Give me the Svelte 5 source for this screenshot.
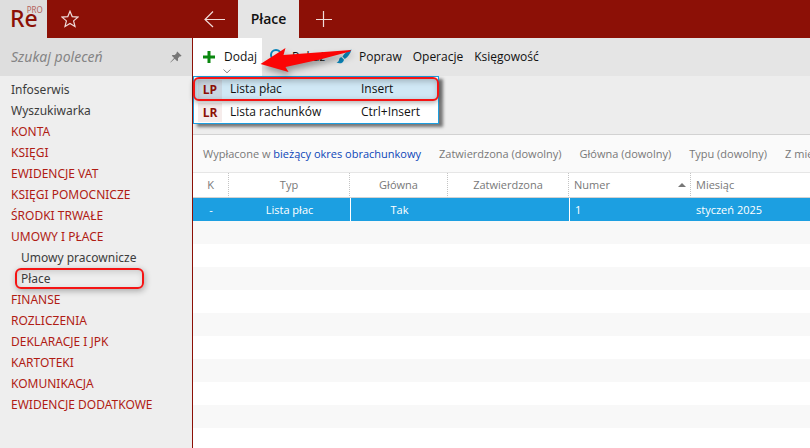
<script>
	let query = $state('');
	let selected = $state(0);
	let current = $state('Płace');

	const modules = [
		{ name: 'Infoserwis', kind: 'plain' },
		{ name: 'Wyszukiwarka', kind: 'plain' },
		{ name: 'KONTA', kind: 'group' },
		{ name: 'KSIĘGI', kind: 'group' },
		{ name: 'EWIDENCJE VAT', kind: 'group' },
		{ name: 'KSIĘGI POMOCNICZE', kind: 'group' },
		{ name: 'ŚRODKI TRWAŁE', kind: 'group' },
		{ name: 'UMOWY I PŁACE', kind: 'group' },
		{ name: 'Umowy pracownicze', kind: 'sub' },
		{ name: 'Płace', kind: 'sub' },
		{ name: 'FINANSE', kind: 'group' },
		{ name: 'ROZLICZENIA', kind: 'group' },
		{ name: 'DEKLARACJE I JPK', kind: 'group' },
		{ name: 'KARTOTEKI', kind: 'group' },
		{ name: 'KOMUNIKACJA', kind: 'group' },
		{ name: 'EWIDENCJE DODATKOWE', kind: 'group' }
	];

	const addMenu = [
		{ code: 'LP', name: 'Lista płac', shortcut: 'Insert' },
		{ code: 'LR', name: 'Lista rachunków', shortcut: 'Ctrl+Insert' }
	];

	const filters = ['Zatwierdzona (dowolny)', 'Główna (dowolny)', 'Typu (dowolny)', 'Z mie'];
	const rows = [{ k: '-', type: 'Lista płac', main: 'Tak', approved: '', number: '1', month: 'styczeń 2025' }];
</script>

<div class="app">
	<header>
		<div class="logo">
			<span class="re">Re</span><span class="pro">PRO</span>
		</div>
		<button class="star" aria-label="Ulubione">
			<svg width="18" height="18" viewBox="0 0 18 18">
				<path d="M9 1.3 11.2 6.6 17 7.1 12.6 10.9 14 16.5 9 13.5 4 16.5 5.4 10.9 1 7.1 6.8 6.6Z" />
			</svg>
		</button>
		<button class="back" aria-label="Wstecz">
			<svg width="22" height="18" viewBox="0 0 22 18">
				<path d="M21 9.5H1M9 1.5 1 9.5 9 17" />
			</svg>
		</button>
		<button class="tab">Płace</button>
		<button class="new-tab" aria-label="Nowa karta">
			<svg width="18" height="18" viewBox="0 0 18 18">
				<path d="M8.5 1v16M1 9.5h16" />
			</svg>
		</button>
	</header>

	<div class="body">
		<aside>
			<div class="search">
				<input type="text" placeholder="Szukaj poleceń" aria-label="Szukaj poleceń" bind:value={query} />
				<button class="pin" aria-label="Przypnij">
					<svg width="12" height="12" viewBox="0 0 12 12">
						<path d="M7.2.4 11.6 4.8 10.6 5.4 9.9 5.2 8 7.2 8 9.6 7.2 10.2 4.7 7.7.6 11.5.3 11.2 4.1 7.1 1.8 4.8 2.4 4 4.8 4 6.8 2.1 6.6 1.3Z" />
					</svg>
				</button>
			</div>
			<nav>
				{#each modules as item}
					<a href="#{item.name}" class={item.kind} class:marked={item.name === current} onclick={() => (current = item.name)}>{item.name}</a>
				{/each}
			</nav>
		</aside>

		<main>
			<div class="toolbar">
				<div class="dropdown">
					<button class="add">
						<svg width="14" height="14" viewBox="0 0 14 14"><path d="M5.5 1h3v4.5H13v3H8.500V13h-3V8.500H1v-3h4.500Z" /></svg>
						Dodaj
						<svg class="chevron" width="8" height="5" viewBox="0 0 8 5"><path d="M.5.5 4 3.800 7.500.5" /></svg>
					</button>
					<ul class="menu">
						{#each addMenu as item, i}
							<li>
								<button class:active={i === 0}>
									<span class="code">{item.code}</span>
									<span class="name">{item.name}</span>
									<span>{item.shortcut}</span>
								</button>
							</li>
						{/each}
					</ul>
				</div>
				<button class="show">
					<svg width="16" height="16" viewBox="0 0 16 16">
						<circle cx="7" cy="6" r="5" />
						<path d="M10.500 9.500 15 14" />
					</svg>
					Pokaż
				</button>
				<button class="edit">
					<svg width="16" height="16" viewBox="0 0 16 16">
						<path d="M15.500.5C12 1.500 8.500 4 6.500 7.500L8.800 10C12 8 14.500 4.500 15.500.5ZM5.700 8.200C3.800 8.200 3.200 9.500 3 11 2.800 12.300 2 13 .5 13.300 3 15.300 7.500 14.500 8 10.700Z" />
					</svg>
					Popraw
				</button>
				<button>Operacje</button>
				<button>Księgowość</button>

				<svg class="arrow" width="94" height="32" viewBox="0 0 94 32">
					<path d="M.5 17 25.500 1 23.500 8 91 3 90 4.500 60 12.500 25.500 20 28.500 25Z" />
				</svg>
			</div>

			<div class="filters">
				<span>Wypłacone w <a href="#okres">bieżący okres obrachunkowy</a></span>
				{#each filters as filter}
					<span>{filter}</span>
				{/each}
			</div>

			<div class="grid">
				<table>
					<colgroup>
						<col class="c-k" />
						<col class="c-type" />
						<col class="c-main" />
						<col class="c-approved" />
						<col class="c-number" />
						<col />
					</colgroup>
					<thead>
						<tr>
							<th>K</th>
							<th>Typ</th>
							<th>Główna</th>
							<th>Zatwierdzona</th>
							<th class="left">
								<div class="sorted">
									Numer
									<svg width="8" height="4" viewBox="0 0 8 4"><path d="M4 0 8 4H0Z" /></svg>
								</div>
							</th>
							<th class="left">Miesiąc</th>
						</tr>
					</thead>
					<tbody>
						{#each rows as row, i}
							<tr class:selected={i === selected} onclick={() => (selected = i)}>
								<td>{row.k}</td>
								<td>{row.type}</td>
								<td class="split">{row.main}</td>
								<td>{row.approved}</td>
								<td class="left split">{row.number}</td>
								<td class="left">{row.month}</td>
							</tr>
						{/each}
					</tbody>
				</table>
				<div class="empty"></div>
			</div>
		</main>
	</div>
</div>

<style>
	:global(body) {
		margin: 0;
	}
	.app {
		display: flex;
		flex-direction: column;
		min-height: 100vh;
		overflow: hidden;
		background: #fff;
		color: #111;
		font: 12px/20px 'Open Sans', 'Noto Sans', sans-serif;
	}
	button,
	input {
		margin: 0;
		padding: 0;
		border: 0;
		background: none;
		color: inherit;
		font: inherit;
	}
	a {
		text-decoration: none;
	}

	/* top bar */
	header {
		display: flex;
		height: 38px;
		background: #8c1006;
	}
	header svg {
		display: block;
		fill: none;
		stroke: #f0dcda;
		stroke-width: 1.2;
	}
	.logo {
		display: flex;
		box-sizing: border-box;
		width: 47px;
		padding-left: 10px;
		background: #dedede;
		color: #8c1006;
	}
	.re {
		font: 500 23px/36px 'Noto Sans', sans-serif;
	}
	.pro {
		margin-left: -11px;
		color: #b4625c;
		font: 8px/20px 'Noto Sans', sans-serif;
	}
	.star {
		width: 146px;
		padding-left: 14px;
	}
	.back {
		width: 45px;
		padding-left: 11px;
	}
	.tab {
		width: 61px;
		background: #e5e5e5;
		font-size: 14px;
		font-weight: 600;
	}
	.new-tab {
		padding: 0 16px;
	}

	.body {
		display: flex;
		flex: 1;
	}

	/* command list */
	aside {
		flex: none;
		width: 192px;
		border-right: 1px solid #8c1006;
		background: #eee;
		font-family: 'Noto Sans', sans-serif;
	}
	.search {
		display: flex;
		align-items: center;
		height: 38px;
		padding: 0 10px 0 11px;
		background: #dedede;
	}
	.search input {
		flex: 1;
		min-width: 0;
		outline: none;
		font-size: 14px;
		font-style: italic;
	}
	.search input::placeholder {
		color: #858585;
		opacity: 1;
	}
	.pin svg {
		display: block;
		fill: #777;
	}
	nav {
		display: flex;
		flex-direction: column;
		padding-top: 3px;
	}
	nav a {
		padding-left: 11px;
		color: #b01c14;
		line-height: 21px;
	}
	nav .plain,
	nav .sub {
		color: #3c3c3c;
	}
	nav .sub {
		padding-left: 21px;
	}
	nav .marked {
		box-sizing: border-box;
		height: 21px;
		margin: 0 48px 0 15px;
		padding-left: 4px;
		border: 2px solid #f51414;
		border-radius: 6px;
		box-shadow: 1px 2px 6px rgba(0, 0, 0, 0.3), inset 1px 2px 6px rgba(0, 0, 0, 0.15);
		line-height: 17px;
	}

	main {
		display: flex;
		flex: 1;
		flex-direction: column;
		min-width: 0;
	}

	/* toolbar */
	.toolbar {
		position: relative;
		display: flex;
		height: 38px;
		border-bottom: 58px solid #ededed;
		background: #e5e5e5;
	}
	.toolbar button {
		display: flex;
		align-items: center;
		margin-right: 11px;
		white-space: nowrap;
	}
	.dropdown {
		position: relative;
		display: flex;
		margin-right: 7px;
	}
	.toolbar .add {
		position: relative;
		gap: 8px;
		width: 69px;
		margin: 0;
		padding-left: 9px;
		background: #fff;
	}
	.add svg {
		flex: none;
		fill: #0a870f;
	}
	.add .chevron {
		position: absolute;
		bottom: 2px;
		left: 30px;
		fill: none;
		stroke: #888;
	}
	.show,
	.edit {
		gap: 7px;
	}
	.show svg {
		fill: none;
		stroke: #0a84b8;
		stroke-width: 2;
	}
	.edit svg {
		fill: #0a84b8;
	}
	.menu {
		position: absolute;
		z-index: 1;
		top: 38px;
		left: 0;
		width: 244px;
		margin: 0;
		padding: 0;
		border: 1px solid #1c9ee0;
		background: #fff;
		box-shadow: 4px 3px 3px rgba(0, 0, 0, 0.5);
		list-style: none;
	}
	.menu button {
		gap: 8px;
		box-sizing: border-box;
		width: 100%;
		height: 22px;
		margin: 0;
		padding-left: 4px;
		text-align: left;
	}
	.menu .active {
		width: 246px;
		height: 24px;
		margin: 0 -1px;
		padding-left: 3px;
		border: 2px solid #f51414;
		border-radius: 6px;
		background: #d0e8f5;
		box-shadow: 0 2px 5px rgba(0, 0, 0, 0.3), inset 1px 2px 6px rgba(0, 0, 0, 0.25);
	}
	.code {
		width: 24px;
		background: rgba(140, 16, 6, 0.08);
		color: #8c1006;
		font-weight: 700;
		line-height: 19px;
		text-align: center;
	}
	.name {
		width: 123px;
	}
	.arrow {
		position: absolute;
		z-index: 2;
		top: 9px;
		left: 67px;
		overflow: visible;
		fill: #fb0505;
		filter: drop-shadow(2px 4px 3px rgba(0, 0, 0, 0.35));
		pointer-events: none;
	}

	/* list filters */
	.filters {
		display: flex;
		gap: 18px;
		height: 37px;
		padding-left: 10px;
		overflow: hidden;
		border-top: 1px solid #d2d2d2;
		border-bottom: 1px solid #e6e6e6;
		background: #fafafa;
		color: #787878;
		font-size: 11px;
		line-height: 37px;
		white-space: nowrap;
	}
	.filters a {
		color: #0c46b8;
	}

	.grid {
		display: flex;
		flex: 1;
		flex-direction: column;
		font-size: 11px;
	}
	table {
		width: 100%;
		border-collapse: separate;
		border-spacing: 0;
		table-layout: fixed;
	}
	.c-k {
		width: 36px;
	}
	.c-type {
		width: 121px;
	}
	.c-main {
		width: 98px;
	}
	.c-approved {
		width: 121px;
	}
	.c-number {
		width: 122px;
	}
	th,
	td {
		box-sizing: border-box;
		height: 23px;
		padding: 0;
		text-align: center;
	}
	th {
		height: 25px;
		border-right: 1px dotted #c4c4c4;
		border-bottom: 1px solid #d2d2d2;
		color: #787878;
		font-weight: 400;
	}
	th:last-child {
		border-right: 0;
	}
	.left {
		padding-left: 5px;
		text-align: left;
	}
	.sorted {
		display: flex;
		align-items: center;
		justify-content: space-between;
		padding-right: 4px;
	}
	.sorted svg {
		fill: #777;
	}
	.selected {
		background: #1c9fe1;
		color: #fff;
	}
	.selected .split {
		border-left: 1px solid #fff;
	}
	.empty {
		flex: 1;
		background: repeating-linear-gradient(#f8f8f8 0 23px, #fff 23px 46px);
	}
</style>
